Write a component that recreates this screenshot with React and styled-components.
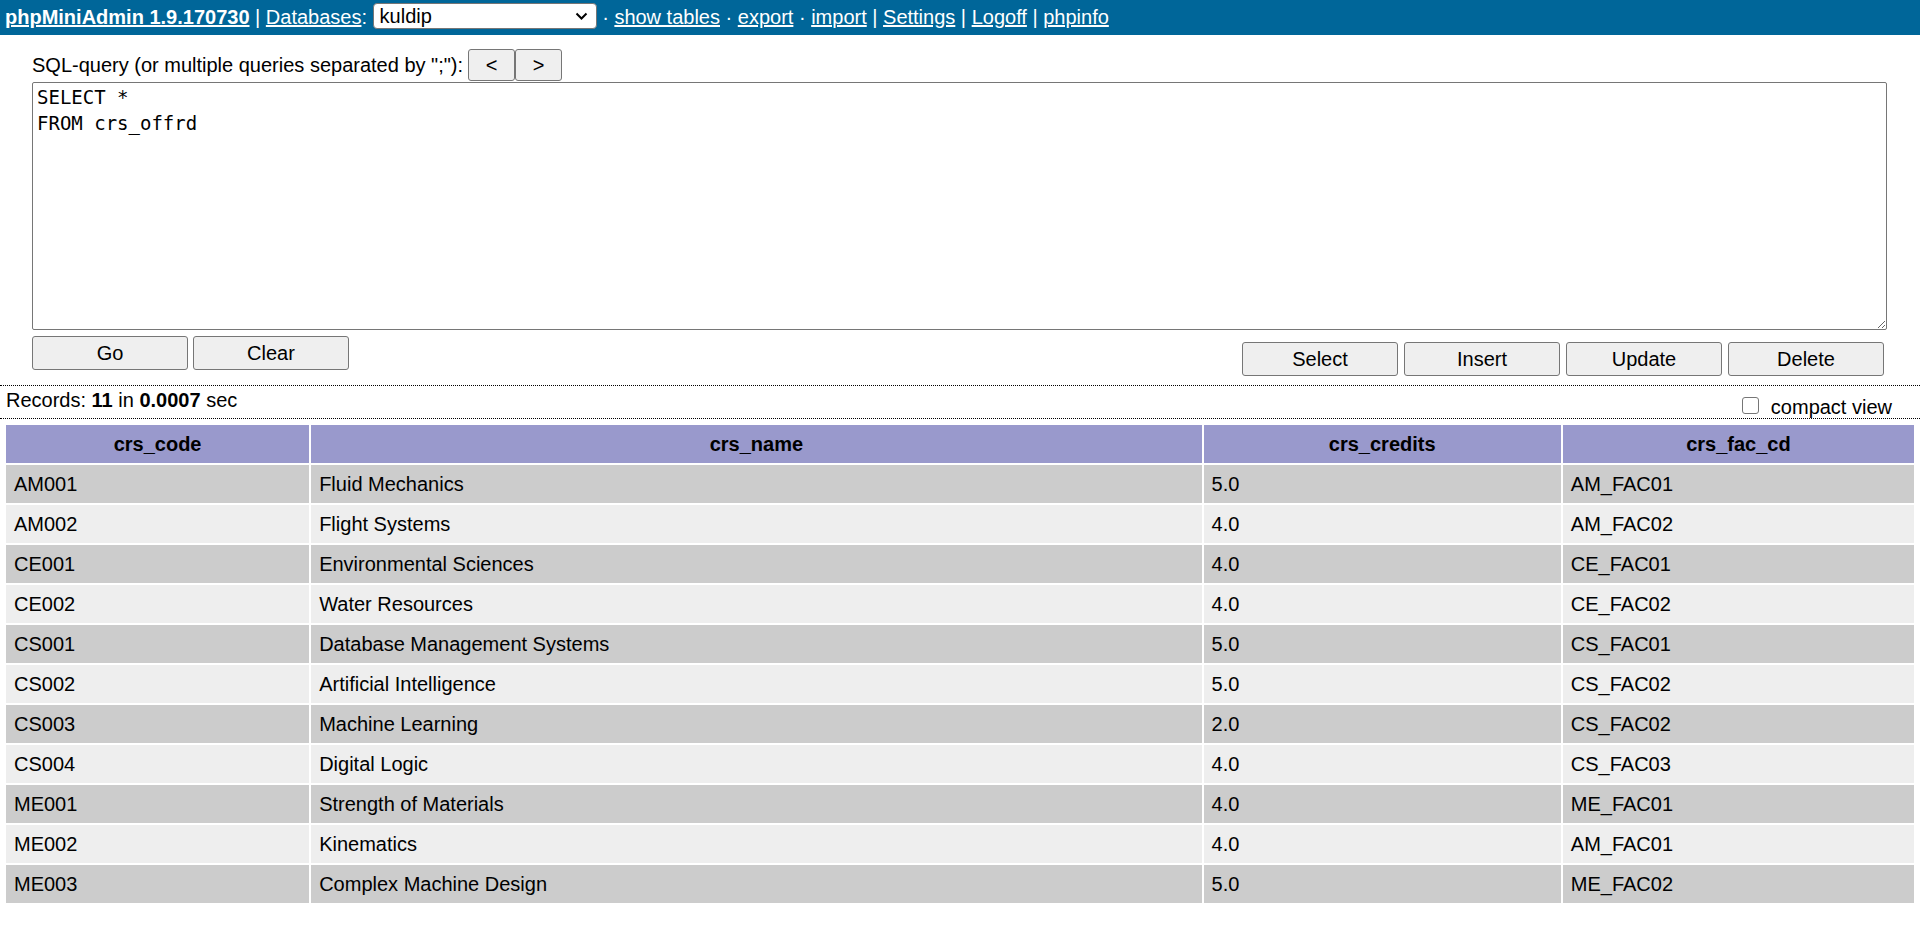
import React from "react";
import styled, { createGlobalStyle } from "styled-components";

const GlobalStyle = createGlobalStyle`
  html, body {
    margin: 0;
    padding: 0;
    background: #ffffff;
  }
  body {
    font-family: "Liberation Sans", Arial, sans-serif;
    font-size: 20px;
    color: #000000;
  }
`;

const TopBar = styled.div`
  height: 35px;
  line-height: 35px;
  padding-left: 5px;
  background-color: #006699;
  color: #ffffff;
  white-space: nowrap;
`;

const BarLink = styled.a`
  color: #ffffff;
  text-decoration: underline;
  font-weight: ${(props) => (props.$strong ? "bold" : "normal")};
  cursor: pointer;
`;

const SelectWrap = styled.span`
  position: relative;
  display: inline-block;
  vertical-align: top;
  margin-top: 3px;
  height: 26px;
  line-height: normal;
`;

const DbSelect = styled.select`
  appearance: none;
  display: block;
  box-sizing: border-box;
  width: 224px;
  height: 26px;
  padding: 0 30px 0 6px;
  font-family: "Liberation Sans", Arial, sans-serif;
  font-size: 20px;
  color: #000000;
  background: #ffffff;
  border: 1px solid #767676;
  border-radius: 4px;
  outline: none;
`;

const Chevron = styled.svg`
  position: absolute;
  top: 9px;
  right: 9px;
  width: 13px;
  height: 8px;
  pointer-events: none;
`;

const QueryForm = styled.div`
  padding: 14px 33px 0 32px;
`;

const LabelRow = styled.div`
  display: flex;
  align-items: center;
  height: 32px;
`;

const LabelText = styled.span`
  margin-right: 5px;
`;

const PlainButton = styled.button`
  box-sizing: border-box;
  width: ${(props) => props.$width || 156}px;
  height: ${(props) => props.$height || 34}px;
  padding: 0;
  font-family: "Liberation Sans", Arial, sans-serif;
  font-size: 20px;
  color: #000000;
  background-color: #efefef;
  border: 1px solid #767676;
  border-radius: 3px;
  cursor: pointer;
`;

const QueryBox = styled.textarea`
  display: block;
  box-sizing: border-box;
  width: 100%;
  height: 248px;
  margin: 1px 0 0 0;
  padding: 2px 4px;
  font-family: "DejaVu Sans Mono", "Liberation Mono", monospace;
  font-size: 19px;
  line-height: 25.6px;
  color: #000000;
  border: 1px solid #767676;
  border-radius: 2px;
  outline: none;
`;

const ActionRow = styled.div`
  display: flex;
  justify-content: space-between;
  align-items: flex-start;
  height: 40px;
  margin-top: 6px;
`;

const ButtonGroup = styled.div`
  display: flex;
  gap: ${(props) => props.$gap}px;
  margin-top: ${(props) => props.$offset || 0}px;
  margin-right: ${(props) => props.$right || 0}px;
`;

const Divider = styled.div`
  border-top: 1px dotted #000000;
  margin-top: ${(props) => props.$top || 0}px;
`;

const StatusBar = styled.div`
  display: flex;
  justify-content: space-between;
  align-items: flex-start;
  height: 32px;
  padding: 0 28px 0 6px;
  line-height: 23px;
`;

const StatusText = styled.div`
  padding-top: 3px;
`;

const CompactLabel = styled.label`
  display: flex;
  align-items: center;
  margin-top: 10px;
  height: 23px;
`;

const CompactBox = styled.input`
  appearance: none;
  box-sizing: border-box;
  width: 17px;
  height: 17px;
  margin: 0 12px 4px 0;
  background: #ffffff;
  border: 1px solid #767676;
  border-radius: 3px;
`;

const ResultTable = styled.table`
  table-layout: fixed;
  width: calc(100% - 8px);
  margin: 4px 0 0 4px;
  border-spacing: 2px;
  border-collapse: separate;
`;

const HeadCell = styled.th`
  height: 38px;
  padding: 0 8px;
  background-color: #9999cc;
  font-weight: bold;
  text-align: center;
  vertical-align: middle;
`;

const Row = styled.tr`
  background-color: ${(props) => (props.$shade ? "#cccccc" : "#eeeeee")};
`;

const Cell = styled.td`
  height: 38px;
  padding: 0 8px;
  text-align: left;
  vertical-align: middle;
  white-space: nowrap;
`;

const columns = [
  { name: "crs_code", width: 303 },
  { name: "crs_name", width: 890 },
  { name: "crs_credits", width: 357 },
  { name: "crs_fac_cd", width: 351 },
];

const rows = [
  ["AM001", "Fluid Mechanics", "5.0", "AM_FAC01"],
  ["AM002", "Flight Systems", "4.0", "AM_FAC02"],
  ["CE001", "Environmental Sciences", "4.0", "CE_FAC01"],
  ["CE002", "Water Resources", "4.0", "CE_FAC02"],
  ["CS001", "Database Management Systems", "5.0", "CS_FAC01"],
  ["CS002", "Artificial Intelligence", "5.0", "CS_FAC02"],
  ["CS003", "Machine Learning", "2.0", "CS_FAC02"],
  ["CS004", "Digital Logic", "4.0", "CS_FAC03"],
  ["ME001", "Strength of Materials", "4.0", "ME_FAC01"],
  ["ME002", "Kinematics", "4.0", "AM_FAC01"],
  ["ME003", "Complex Machine Design", "5.0", "ME_FAC02"],
];

export default function App() {
  return (
    <>
      <GlobalStyle />
      <TopBar>
        <BarLink $strong>phpMiniAdmin 1.9.170730</BarLink> |{" "}
        <BarLink>Databases</BarLink>:{" "}
        <SelectWrap>
          <DbSelect defaultValue="kuldip">
            <option value="kuldip">kuldip</option>
          </DbSelect>
          <Chevron viewBox="0 0 13 8">
            <polyline
              points="1.5,1.5 6.5,6.5 11.5,1.5"
              fill="none"
              stroke="#000000"
              strokeWidth="2"
            />
          </Chevron>
        </SelectWrap>{" "}
        · <BarLink>show tables</BarLink> · <BarLink>export</BarLink> ·{" "}
        <BarLink>import</BarLink> | <BarLink>Settings</BarLink> |{" "}
        <BarLink>Logoff</BarLink> | <BarLink>phpinfo</BarLink>
      </TopBar>

      <QueryForm>
        <LabelRow>
          <LabelText>SQL-query (or multiple queries separated by ";"):</LabelText>
          <PlainButton $width={47} $height={32}>
            &lt;
          </PlainButton>
          <PlainButton $width={47} $height={32}>
            &gt;
          </PlainButton>
        </LabelRow>
        <QueryBox defaultValue={"SELECT *\nFROM crs_offrd"} spellCheck={false} />
        <ActionRow>
          <ButtonGroup $gap={5}>
            <PlainButton>Go</PlainButton>
            <PlainButton>Clear</PlainButton>
          </ButtonGroup>
          <ButtonGroup $gap={6} $offset={6} $right={3}>
            <PlainButton>Select</PlainButton>
            <PlainButton>Insert</PlainButton>
            <PlainButton>Update</PlainButton>
            <PlainButton>Delete</PlainButton>
          </ButtonGroup>
        </ActionRow>
      </QueryForm>

      <Divider $top={9} />
      <StatusBar>
        <StatusText>
          Records: <b>11</b> in <b>0.0007</b> sec
        </StatusText>
        <CompactLabel>
          <CompactBox type="checkbox" />
          compact view
        </CompactLabel>
      </StatusBar>
      <Divider />

      <ResultTable>
        <colgroup>
          {columns.map((col) => (
            <col key={col.name} style={{ width: col.width }} />
          ))}
        </colgroup>
        <thead>
          <tr>
            {columns.map((col) => (
              <HeadCell key={col.name}>{col.name}</HeadCell>
            ))}
          </tr>
        </thead>
        <tbody>
          {rows.map((row, i) => (
            <Row key={row[0]} $shade={i % 2 === 0}>
              {row.map((value, j) => (
                <Cell key={j}>{value}</Cell>
              ))}
            </Row>
          ))}
        </tbody>
      </ResultTable>
    </>
  );
}
